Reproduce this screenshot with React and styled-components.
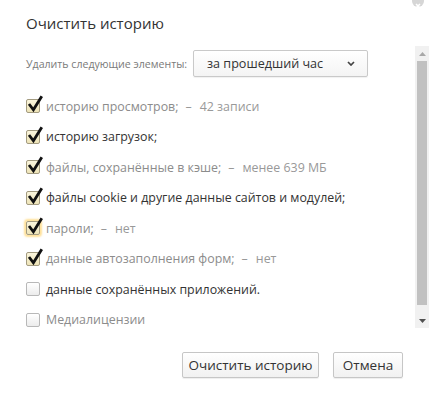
import React from 'react';
import styled, { createGlobalStyle, css } from 'styled-components';

const GlobalStyle = createGlobalStyle`
  html, body {
    margin: 0;
    padding: 0;
    background: #fff;
  }
  body {
    font-family: "Open Sans", "Noto Sans", sans-serif;
  }
`

const Dialog = styled.div`
  position: relative;
  width: 429px;
  height: 400px;
  overflow: hidden;
  background: #fff;
`

const Header = styled.div`
  height: 46px;
  box-sizing: border-box;
  padding: 13px 0 0 26px;
`

const Title = styled.div`
  font-size: 15px;
  line-height: 20px;
  color: #333;
`

const Close = styled.div`
  position: absolute;
  top: -5px;
  right: 5px;
  width: 12px;
  height: 12px;
  border-radius: 50%;
  background: #d6d6d6;
`

const Body = styled.div`
  display: flex;
  height: 282px;
`

const Content = styled.div`
  flex: 1;
  padding: 4px 0 0 26px;
`

const PeriodRow = styled.div`
  display: flex;
  align-items: center;
  height: 27px;
`

const PeriodLabel = styled.div`
  width: 167px;
  font-size: 10.6px;
  white-space: nowrap;
  color: #7a7a7a;
`

const Select = styled.div`
  box-sizing: border-box;
  width: 175px;
  height: 27px;
  display: flex;
  align-items: center;
  justify-content: space-between;
  padding: 0 12px 0 13px;
  border: 1px solid #c9c9c9;
  border-radius: 2px;
  background: linear-gradient(#fff, #f4f4f4);
  box-shadow: 0 1px 1px rgba(0, 0, 0, 0.06);
  font-size: 12.6px;
  color: #333;
`

const List = styled.div`
  display: flex;
  flex-direction: column;
  margin-top: 14px;
`

const Row = styled.div`
  display: flex;
  align-items: center;
  height: 30.5px;
  font-size: 12.4px;
  color: ${p => (p.dim ? '#8c8c8c' : '#333')};
  white-space: nowrap;
`

const Box = styled.div`
  position: relative;
  box-sizing: border-box;
  width: 14px;
  height: 14px;
  margin-right: 6px;
  flex: none;
  border: 1px solid ${p => (p.checked ? '#a39b80' : '#b8b8b8')};
  border-radius: 2px;
  background: ${p => (p.checked
    ? 'linear-gradient(#faf5dc, #eee4b8)'
    : 'linear-gradient(#fff, #ececec)')};
  ${p => p.focused && css`
    box-shadow: 0 0 2px 2px rgba(255, 200, 70, 0.55);
  `}
`

const Tick = styled.svg`
  position: absolute;
  left: -1px;
  top: -5px;
  overflow: visible;
`

const Suffix = styled.span`
  margin-left: 7px;
  color: #999;
`

const Amount = styled.span`
  margin-left: 8px;
`

const Scrollbar = styled.div`
  width: 14px;
  display: flex;
  flex-direction: column;
  align-items: center;
  background: #f1f1f1;
`

const Arrow = styled.div`
  height: 15px;
  display: flex;
  align-items: center;
  justify-content: center;
`

const Thumb = styled.div`
  width: 10px;
  height: 244px;
  background: #c1c1c1;
`

const Spacer = styled.div`
  flex: 1;
`

const Footer = styled.div`
  display: flex;
  justify-content: flex-end;
  gap: 14px;
  padding: 24px 26px 0 0;
`

const Button = styled.div`
  box-sizing: border-box;
  width: ${p => p.w}px;
  height: 26px;
  display: flex;
  align-items: center;
  justify-content: center;
  border: 1px solid #c6c6c6;
  border-radius: 2px;
  background: linear-gradient(#fff, #f1f1f1);
  box-shadow: 0 1px 1px rgba(0, 0, 0, 0.07);
  font-size: 13.5px;
  color: #333;
`

const items = [
  { text: 'историю просмотров;', suffix: '42 записи', checked: true, dim: true },
  { text: 'историю загрузок;', checked: true },
  { text: 'файлы, сохранённые в кэше;', suffix: 'менее 639 МБ', checked: true, dim: true },
  { text: 'файлы cookie и другие данные сайтов и модулей;', checked: true },
  { text: 'пароли;', suffix: 'нет', checked: true, dim: true, focused: true },
  { text: 'данные автозаполнения форм;', suffix: 'нет', checked: true, dim: true },
  { text: 'данные сохранённых приложений.' },
  { text: 'Медиалицензии', dim: true },
]

const Checkbox = ({ checked, focused }) => (
  <Box checked={checked} focused={focused}>
    {checked && (
      <Tick width="18" height="18" viewBox="0 -4 18 18">
        <path d="M3 5 L7.4 10.8 L15.8 -2.8" fill="none" stroke="#111" strokeWidth="2.8" />
      </Tick>
    )}
  </Box>
)

const App = () => (
  <Dialog>
    <GlobalStyle />
    <Close>
      <svg width="12" height="12" viewBox="0 0 12 12">
        <path d="M4 4 L8 8 M8 4 L4 8" stroke="#fff" strokeWidth="1.6" />
      </svg>
    </Close>
    <Header>
      <Title>Очистить историю</Title>
    </Header>

    <Body>
      <Content>
        <PeriodRow>
          <PeriodLabel>Удалить следующие элементы:</PeriodLabel>
          <Select>
            за прошедший час
            <svg width="8" height="5" viewBox="0 0 8 5">
              <path d="M1 1 L4 4 L7 1" fill="none" stroke="#444" strokeWidth="1.7" />
            </svg>
          </Select>
        </PeriodRow>

        <List>
          {items.map(item => (
            <Row key={item.text} dim={item.dim}>
              <Checkbox checked={item.checked} focused={item.focused} />
              {item.text}
              {item.suffix && (
                <Suffix>
                  –<Amount>{item.suffix}</Amount>
                </Suffix>
              )}
            </Row>
          ))}
        </List>
      </Content>

      <Scrollbar>
        <Arrow>
          <svg width="7" height="4" viewBox="0 0 7 4">
            <path d="M0 4 L3.5 0 L7 4 Z" fill="#a8a8a8" />
          </svg>
        </Arrow>
        <Thumb />
        <Spacer />
        <Arrow>
          <svg width="7" height="4" viewBox="0 0 7 4">
            <path d="M0 0 L3.5 4 L7 0 Z" fill="#505050" />
          </svg>
        </Arrow>
      </Scrollbar>
    </Body>

    <Footer>
      <Button w={137}>Очистить историю</Button>
      <Button w={70}>Отмена</Button>
    </Footer>
  </Dialog>
)

export default App;
